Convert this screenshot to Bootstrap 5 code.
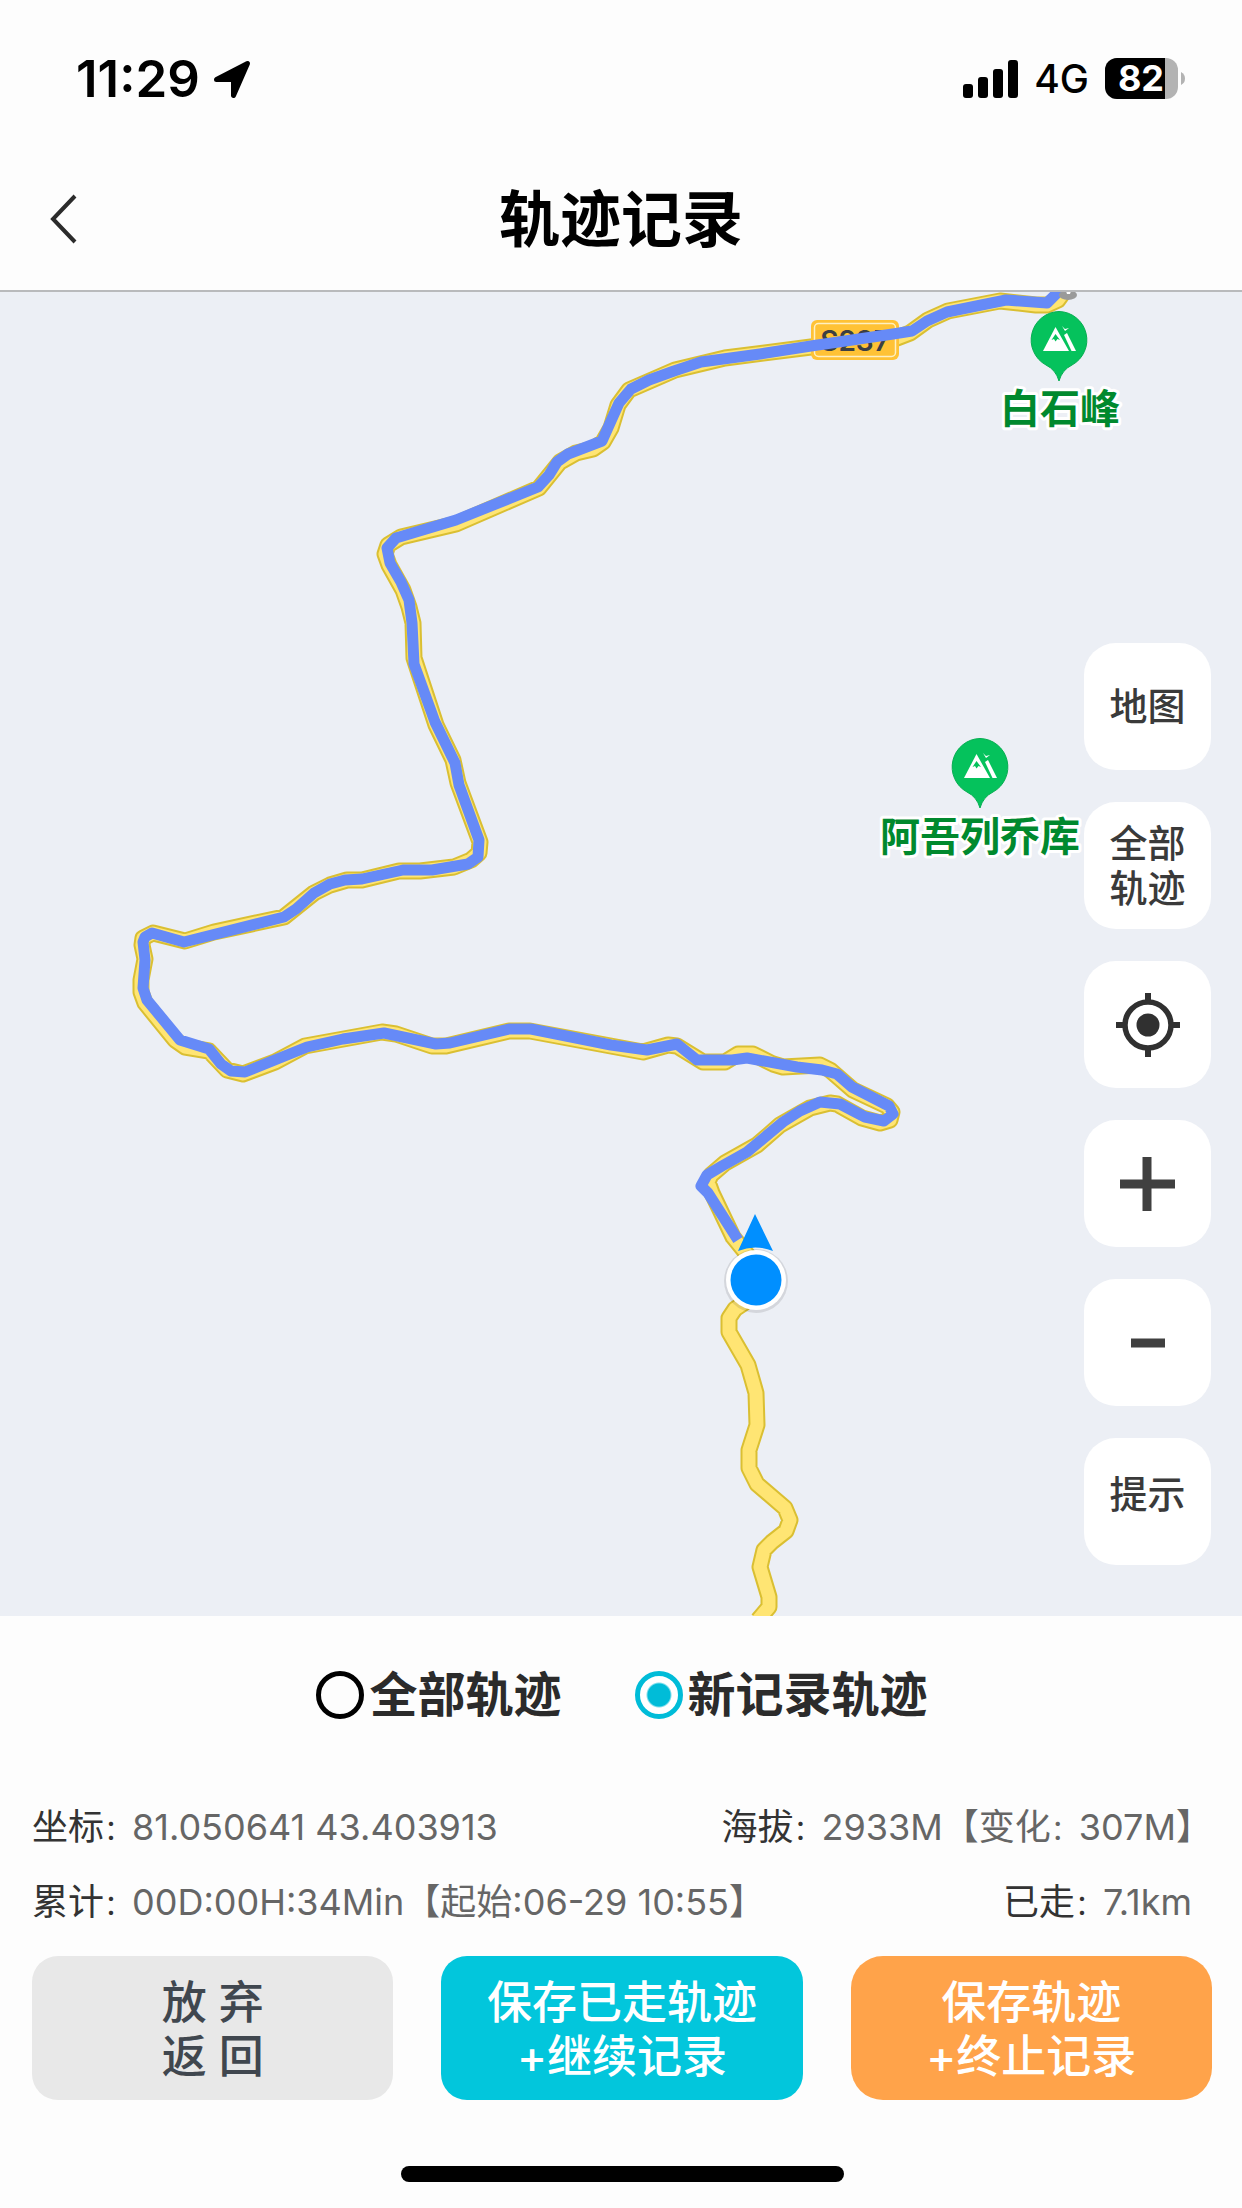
<!DOCTYPE html>
<html lang="zh-CN">
<head>
<meta charset="utf-8">
<meta name="viewport" content="width=device-width, initial-scale=1">
<title>轨迹记录</title>
<link href="https://cdn.jsdelivr.net/npm/bootstrap@5.3.0/dist/css/bootstrap.min.css" rel="stylesheet">
<style>
  body { font-family: Inter, "Noto Sans CJK SC", sans-serif; background: #fdfdfd; color: #000; }
  .status-bar { height: 146px; padding: 12px 56px 0 76px; }
  .clock { font-size: 51px; line-height: 60px; font-weight: 600; }
  .network { font-size: 39px; line-height: 60px; font-weight: 500; }
  .title-bar { height: 144px; }
  .page-title { font-size: 61px; line-height: 80px; font-weight: 700; }
  .back-btn { padding: 8px 48px; border: 0; }
  .top-area { border-bottom: 2px solid #b9babc; }
  .map-area { background: #eceff5; min-height: 1200px; }
  .map-tools { right: 31px; bottom: 51px; gap: 32px; }
  .tool-btn { width: 127px; height: 127px; border-radius: 32px; background: #fff; color: #3a3a3a;
    font-size: 38px; line-height: 45px; font-weight: 500; }
  .tool-btn:hover { background: #f6f6f6; }
  .tool-hint { padding-bottom: 15px; }
  .place-name { font-size: 40px; font-weight: 700; fill: #00892e; stroke: #fff; stroke-width: 6px;
    stroke-linejoin: round; paint-order: stroke; text-anchor: middle; }
  .panel { padding: 43px 30px 26px 32px; }
  .scope-row { gap: 73px; margin-bottom: 59px; }
  .scope-item { gap: 5px; }
  .scope-item label { font-size: 48px; line-height: 72px; font-weight: 700; color: #2b2b2b; }
  .scope-item .form-check-input { width: 48px; height: 48px; border: 5px solid #000; background: none; box-shadow: none; }
  .scope-item .form-check-input:checked { border-color: #00bcd8; background: radial-gradient(circle, #00bcd8 11px, #fff 13px); }
  .info-row { font-size: 36px; line-height: 75px; color: #666; }
  .info-row b { font-weight: 400; color: #333; }
  .colon { font-size: 28px; line-height: 1; }
  .distance { margin-right: 20px; }
  .actions { gap: 48px; margin-top: 16px; }
  .act-btn { height: 144px; border-radius: 26px; border: 0; font-size: 45px; line-height: 54px; font-weight: 500; }
  .act-drop, .act-drop:hover { background: #e8e8e8; color: #40474f; }
  .act-save, .act-save:hover { background: #02c6dc; color: #fff; }
  .act-stop, .act-stop:hover { background: #ffa34a; color: #fff; border-radius: 32px; }
  .home-bar { width: 443px; height: 16px; border-radius: 8px; background: #000; margin-top: 66px; }
</style>
<script src="https://cdn.jsdelivr.net/npm/bootstrap@5.3.0/dist/js/bootstrap.bundle.min.js"></script>
</head>
<body>
<div class="d-flex flex-column min-vh-100">

  <header class="top-area">
    <div class="status-bar d-flex align-items-center justify-content-between">
      <div class="d-flex align-items-center gap-2">
        <span class="clock">11:29</span>
        <svg class="ms-1" width="40" height="40" viewBox="0 0 40 40" aria-hidden="true">
          <path d="M35.500 4.500 21.500 36.500V20.500H4.500Z" fill="#000" stroke="#000" stroke-width="5" stroke-linejoin="round"/>
        </svg>
      </div>
      <div class="d-flex align-items-center gap-3">
        <svg width="56" height="40" viewBox="0 0 56 40" aria-hidden="true">
          <rect x="1" y="25" width="10" height="14" rx="3"/><rect x="16" y="18" width="10" height="21" rx="3"/>
          <rect x="31" y="10" width="10" height="29" rx="3"/><rect x="46" y="1" width="10" height="38" rx="3"/>
        </svg>
        <span class="network">4G</span>
        <svg width="81" height="42" viewBox="0 0 81 42" role="img" aria-label="82%">
          <defs><clipPath id="cell"><rect width="73" height="41" rx="12"/></clipPath></defs>
          <g clip-path="url(#cell)"><rect width="73" height="41" fill="#b3b3b3"/><rect width="60" height="41"/></g>
          <path d="M76 14q4 2 4 6.500t-4 6.500z" fill="#b3b3b3"/>
          <text x="36" y="33" font-size="36" font-weight="700" fill="#fff" text-anchor="middle">82</text>
        </svg>
      </div>
    </div>
    <div class="title-bar d-flex align-items-center">
      <div class="col">
        <button type="button" class="btn back-btn" aria-label="返回">
          <svg class="d-block" width="32" height="54" viewBox="0 0 32 54" fill="none" stroke="#2b2b2b" stroke-width="4"><path d="M27 5 5 28l22 23"/></svg>
        </button>
      </div>
      <h1 class="page-title mb-0 pt-1">轨迹记录</h1>
      <div class="col"></div>
    </div>
  </header>

  <main class="map-area position-relative flex-grow-1 overflow-hidden">
    <svg class="position-absolute top-0 start-0 w-100 h-100" viewBox="0 292 1242 1324" preserveAspectRatio="xMidYMid slice" aria-label="地图">
      <defs>
        <path id="road" d="M1068 286 1058 300 1047 305 1036 305 1000 301 948 311 928 320 910 333 897 338 811 347 725 358 675 370 629 390 618 405 611 428 603 442 593 449 576 453 560 462 539 488 456 524 401 537 388 545 385 554 389 565 403 590 409 607 413 623 414 658 436 725 453 760 458 783 480 842 479 853 471 860 454 867 420 871 399 871 362 880 347 880 330 885 314 893 284 917 214 932 185 941 153 933 143 938 142 945 145 959 141 980 141 992 145 1003 175 1040 185 1047 209 1051 227 1070 243 1074 275 1062 305 1046 382 1032 396 1034 432 1046 446 1046 509 1031 530 1031 643 1052 668 1045 677 1046 703 1062 725 1062 738 1054 753 1054 773 1064 783 1067 820 1065 830 1070 853 1090 887 1106 892 1112 890 1120 880 1123 862 1118 837 1104 830 1103 810 1108 780 1125 757 1145 725 1163 711 1175 708 1182 712 1193 733 1237 750 1258 762 1285 747 1301 735 1309 729 1318 729 1332 748 1365 756 1393 757 1425 749 1450 749 1468 757 1484 785 1508 790 1520 786 1531 772 1542 764 1550 760 1567 769 1597 769 1607 758 1620"/>
        <g id="peak">
          <path d="M0-28.500a28.500 28.500 0 0 1 13 53.500Q3 30 0 41-3 30-13 25A28.500 28.500 0 0 1 0-28.500Z" fill="#05c25c" stroke="#05ae50" stroke-width="1"/>
          <path d="M-16 11-3.500-13 10 11Z" fill="#fff"/>
          <path d="M-7.500 0-3.500-6 1 0-1.500-1-3.500 1.500-5-1Z" fill="#05c25c"/>
          <path d="M5-5 8-7 17 11H12.500Z" fill="#fff"/>
          <path d="M3-14 6-11 10-12 6-9Z" fill="#fff"/>
        </g>
      </defs>
      <g fill="none" stroke-linejoin="round">
        <use href="#road" stroke="#dabf32" stroke-width="17"/>
        <use href="#road" stroke="#ffe573" stroke-width="13"/>
      </g>
      <rect x="811" y="320" width="88" height="40" rx="6" fill="#ffc235"/>
      <rect x="814.500" y="323.500" width="81" height="33" rx="4" fill="none" stroke="#fff0c0" stroke-width="1.500"/>
      <text x="855" y="351" font-size="28" font-weight="600" fill="#3c3f44" text-anchor="middle">S237</text>
      <path fill="none" stroke="#668af7" stroke-width="11" stroke-linejoin="round" d="M1064 286 1047 303 1006 300 947 312 927 321 912 331 893 334 811 346 760 354 701 362 674 371 649 380 631 389 619 403 602 441 568 454 557 462 549 475 538 487 456 520 396 538 387 548 390 563 401 582 409 600 412 623 414 664 435 722 455 763 459 785 479 840 478 857 468 864 432 870 403 870 362 879 345 880 330 884 314 893 296 909 284 917 184 942 152 933 145 937 143 942 145 960 143 988 147 1000 180 1040 209 1049 221 1064 231 1071 245 1072 307 1047 343 1039 384 1033 436 1044 450 1043 509 1029 531 1029 611 1045 647 1050 677 1044 687 1052 697 1060 732 1060 747 1058 797 1067 822 1070 837 1074 852 1087 889 1106 893 1114 884 1121 865 1117 840 1104 820 1102 800 1111 783 1122 747 1152 722 1166 707 1175 701 1186 708 1193 738 1240"/>
      <ellipse cx="1068" cy="295" rx="9" ry="5" fill="#9a9a9a"/>
      <path d="M1065 288h7l-2 6h-3z" fill="#fff"/>
      <use href="#peak" x="1059" y="340"/>
      <text class="place-name" x="1060" y="423">白石峰</text>
      <use href="#peak" x="980" y="767"/>
      <text class="place-name" x="980" y="851">阿吾列乔库</text>
      <path d="M755 1214 773 1251Q755 1244 738 1251Z" fill="#008fff"/>
      <circle cx="756" cy="1281" r="32" fill="#000" opacity=".1"/>
      <circle cx="756" cy="1280" r="30" fill="#fff"/>
      <circle cx="756" cy="1280" r="25.500" fill="#008fff"/>
    </svg>

    <div class="map-tools position-absolute d-flex flex-column">
      <button type="button" class="btn tool-btn border-0 p-0">地图</button>
      <button type="button" class="btn tool-btn border-0 p-0">全部<br>轨迹</button>
      <button type="button" class="btn tool-btn border-0 p-0 d-flex align-items-center justify-content-center" aria-label="定位">
        <svg width="64" height="64" viewBox="0 0 64 64" fill="none" stroke="#303030"><circle cx="32" cy="32" r="23" stroke-width="5.500"/><circle cx="32" cy="32" r="11.500" fill="#303030" stroke="none"/><path stroke-width="6" d="M32 0v8M32 56v8M0 32h8M56 32h8"/></svg>
      </button>
      <button type="button" class="btn tool-btn border-0 p-0 d-flex align-items-center justify-content-center" aria-label="放大">
        <svg width="56" height="56" viewBox="0 0 56 56" stroke="#404040" stroke-width="9"><path d="M27 1v54M0 28h55"/></svg>
      </button>
      <button type="button" class="btn tool-btn border-0 p-0 d-flex align-items-center justify-content-center" aria-label="缩小">
        <svg width="56" height="56" viewBox="0 0 56 56" stroke="#404040" stroke-width="9"><path d="M11 28h34"/></svg>
      </button>
      <button type="button" class="btn tool-btn border-0 px-0 pt-0 tool-hint">提示</button>
    </div>
  </main>

  <section class="panel">
    <div class="scope-row d-flex justify-content-center">
      <div class="scope-item d-flex align-items-center">
        <input class="form-check-input m-0" type="radio" name="scope" id="scopeAll">
        <label for="scopeAll">全部轨迹</label>
      </div>
      <div class="scope-item d-flex align-items-center">
        <input class="form-check-input m-0" type="radio" name="scope" id="scopeNew" checked>
        <label for="scopeNew">新记录轨迹</label>
      </div>
    </div>

    <div class="info-row d-flex justify-content-between">
      <div><b>坐标<span class="colon">：</span></b>81.050641 43.403913</div>
      <div><b>海拔<span class="colon">：</span></b>2933M【变化<span class="colon">：</span>307M】</div>
    </div>
    <div class="info-row d-flex justify-content-between">
      <div><b>累计<span class="colon">：</span></b>00D:00H:34Min【起始:06-29 10:55】</div>
      <div class="distance"><b>已走<span class="colon">：</span></b>7.1km</div>
    </div>

    <div class="actions d-flex">
      <button type="button" class="btn act-btn act-drop col px-0 pt-1 pb-0">放 弃<br>返 回</button>
      <button type="button" class="btn act-btn act-save col px-0 pt-1 pb-0">保存已走轨迹<br>+继续记录</button>
      <button type="button" class="btn act-btn act-stop col px-0 pt-1 pb-0">保存轨迹<br>+终止记录</button>
    </div>

    <div class="home-bar mx-auto"></div>
  </section>
</div>
</body>
</html>
